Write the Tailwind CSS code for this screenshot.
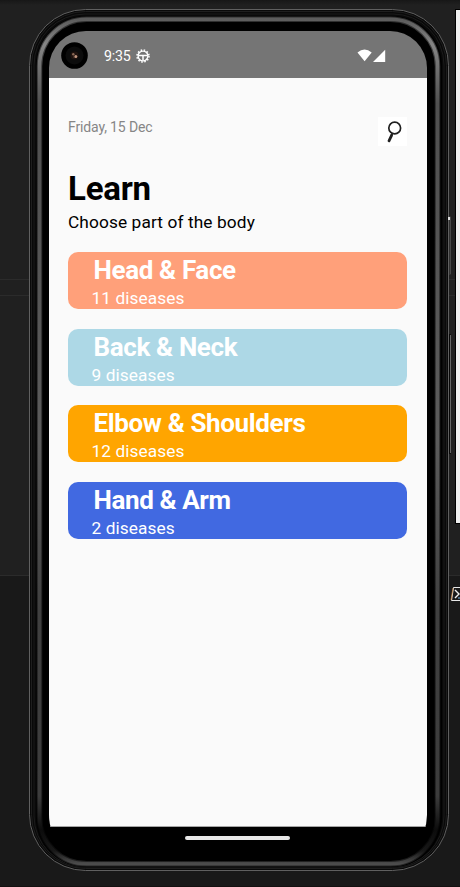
<!DOCTYPE html>
<html lang="en">
<head>
<meta charset="utf-8">
<title>Learn</title>
<script src="https://cdn.jsdelivr.net/npm/@tailwindcss/browser@4"></script>
</head>
<body class="relative h-[887px] w-[460px] overflow-hidden bg-[#202020] font-['Roboto',sans-serif]">
<!-- desktop behind the device, and the device shell -->
<svg class="absolute inset-0" width="460" height="887" viewBox="0 0 460 887" fill="none">
  <defs>
    <linearGradient id="top" x1="0" y1="0" x2="0" y2="1"><stop stop-color="#171717"/><stop offset="1" stop-color="#202020"/></linearGradient>
    <linearGradient id="rim" x1="0" y1="0" x2="0" y2="1"><stop stop-color="#5c5c5c"/><stop offset=".03" stop-color="#858585"/><stop offset=".1" stop-color="#505050"/><stop offset=".5" stop-color="#5b5b5b"/><stop offset=".7" stop-color="#404040"/><stop offset=".92" stop-color="#3c3c3c"/><stop offset=".96" stop-color="#0c0c0c"/><stop offset=".985" stop-color="#181818"/><stop offset="1" stop-color="#4c4c4c"/></linearGradient>
  </defs>
  <rect width="460" height="5" fill="url(#top)"/>
  <path d="M0 279.500H460M0 295.500H460" stroke="#2b2b2b"/>
  <rect y="575" width="460" height="312" fill="#191919"/>
  <path d="M0 575.500H460" stroke="#2b2b2b"/>
  <path d="M0 886.500H460" stroke="#141010"/>
  <rect x="455" y="9" width="5" height="515" fill="#000"/>
  <rect x="456" y="10" width="4" height="513" fill="#f0f0f0"/>
  <rect x="448" y="216" width="3" height="59" rx="1" fill="#303030"/>
  <path d="M450.500 217V274" stroke="#484848"/>
  <rect x="448" y="334" width="3" height="120" rx="1" fill="#080808"/>
  <path d="M450.500 335V453" stroke="#666"/>
  <path d="M453.500 587.500H462V600.500H451.500Z" fill="#191919" stroke="#e8e8e8"/>
  <path d="M453 588L451 600" stroke="#d28b45" stroke-width=".7"/>
  <path d="M455 590L459 594L455 598" stroke="#f2f2f2" stroke-width="1.400"/>
  <path d="M458 598H460" stroke="#76b7ee"/>
  <rect x="29.500" y="9.500" width="419" height="861" rx="56" fill="#090909" stroke="#606060"/>
  <rect x="31.500" y="11.500" width="415" height="857" rx="54" stroke="#1e1e1e"/>
  <rect x="34" y="14" width="410" height="853" rx="51" stroke="#1b1b1b"/>
  <rect x="36" y="16" width="406" height="851" rx="50" fill="#000"/>
  <rect x="39.500" y="19.200" width="398" height="844.500" rx="47" stroke="url(#rim)" stroke-width="5.500" opacity=".5"/>
  <rect x="39.500" y="19.200" width="398" height="844.500" rx="47" stroke="url(#rim)" stroke-width="3.500"/>
  <rect x="448" y="217" width="2" height="3" fill="#ddd"/>
</svg>

<!-- screen -->
<div class="relative ml-[49px] mt-[31px] flex h-[829px] w-[378px] flex-col overflow-hidden rounded-t-[37px] rounded-b-[45px] bg-black">
  <header class="relative flex h-[47px] shrink-0 items-center bg-[#757575] pl-[12px] pt-[2px]">
    <svg class="shrink-0" width="27" height="27" viewBox="0 0 27 27"><circle cx="13.500" cy="13.500" r="13.300" fill="#000"/><circle cx="13.500" cy="13.500" r="9" fill="#0c0c0c"/><circle cx="13.500" cy="13.500" r="4" fill="#20130f"/><circle cx="12.300" cy="12.300" r="1.200" fill="#8a6854"/><circle cx="14.800" cy="14.500" r="1.500" fill="#c3977f"/><circle cx="13" cy="15" r=".7" fill="#6d5145"/></svg>
    <span class="ml-[16px] text-[14.200px] leading-5 tracking-[-0.2px] text-white">9:35</span>
    <svg class="ml-[5px]" width="14" height="14" viewBox="0 0 14 14" fill="none" stroke="#fff"><circle cx="7" cy="7" r="6" stroke-width="1.500" stroke-dasharray="1.570 1.570"/><circle cx="7" cy="7" r="4.900" stroke-width="1.400"/><path d="M2.500 6.500H11.500M7 6.500V11.500" stroke-width="1.500"/></svg>
    <svg class="ml-auto mr-[41px]" width="29" height="13" viewBox="0 0 29 13" fill="#fff"><path d="M.5 3.600Q7.500-2.400 14.700 3.600L7.600 12.200Z"/><path d="M16 13H28.200V.8Z"/></svg>
  </header>
  <main class="h-[749px] shrink-0 border-b border-[#a5a5a5] bg-[#fafafa] pl-[19px] pr-[20px] pt-[39px]">
    <div class="flex h-[52px] items-start justify-between">
      <p class="text-[14px] leading-5 tracking-[-0.14px] text-[#868686]">Friday, 15 Dec</p>
      <svg width="29" height="29" viewBox="0 0 29 29" fill="none" stroke="#202020"><rect width="29" height="29" fill="#fff" stroke="none"/><circle cx="16.700" cy="11" r="5.900" stroke-width="1.700"/><path d="M14.300 16.500L13.300 18.500" stroke-width="1.700"/><path d="M13.600 18.300L11 23.800" stroke-width="2.800" stroke-linecap="round"/></svg>
    </div>
    <h1 class="text-[33px] font-bold leading-10 tracking-[-0.2px] text-black">Learn</h1>
    <p class="mt-px text-[17.300px] leading-6 tracking-[0.11px] text-black">Choose part of the body</p>
    <div class="mt-[18px] flex flex-col gap-[19.600px] text-white">
      <section class="h-[57px] rounded-[10px] bg-[#ffa07a] pl-[23.500px] pt-[3px]"><h2 class="ml-[2px] text-[26px] font-bold leading-[30px] tracking-[-0.37px]">Head &amp; Face</h2><p class="mt-px text-[17.300px] leading-6 tracking-[0.08px]">11 diseases</p></section>
      <section class="h-[57px] rounded-[10px] bg-[#add8e6] pl-[23.500px] pt-[3px]"><h2 class="ml-[2px] text-[26px] font-bold leading-[30px] tracking-[-0.37px]">Back &amp; Neck</h2><p class="mt-px text-[17.300px] leading-6 tracking-[0.08px]">9 diseases</p></section>
      <section class="h-[57px] rounded-[10px] bg-[#ffa500] pl-[23.500px] pt-[3px]"><h2 class="ml-[2px] text-[26px] font-bold leading-[30px] tracking-[-0.37px]">Elbow &amp; Shoulders</h2><p class="mt-px text-[17.300px] leading-6 tracking-[0.08px]">12 diseases</p></section>
      <section class="h-[57px] rounded-[10px] bg-[#4169e1] pl-[23.500px] pt-[3px]"><h2 class="ml-[2px] text-[26px] font-bold leading-[30px] tracking-[-0.4px]">Hand &amp; Arm</h2><p class="mt-px text-[17.300px] leading-6 tracking-[0.08px]">2 diseases</p></section>
    </div>
  </main>
  <div class="ml-[136px] mt-[9px] h-[4px] w-[105px] rounded-full bg-[#e8e8e8]"></div>
</div>
</body>
</html>
